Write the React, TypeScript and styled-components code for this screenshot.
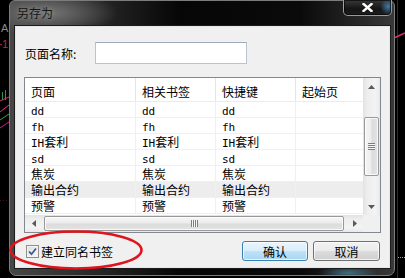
import React from "react";
import styled, { createGlobalStyle } from "styled-components";

const GlobalStyle = createGlobalStyle`
  html, body { margin: 0; padding: 0; background: #000; }
  body {
    overflow: hidden;
    font-family: "Noto Sans CJK SC", "Liberation Sans", sans-serif;
    font-size: 12px;
    color: #000;
  }
  * { box-sizing: border-box; }
`;

const Stage = styled.div`
  position: relative;
  width: 405px;
  height: 278px;
  overflow: hidden;
  background: #000;
  padding-left: 9px;
`;

const Backdrop = styled.svg`
  position: absolute;
  left: 0;
  top: 0;
`;

const Window = styled.div`
  position: relative;
  width: 386px;
  height: 276px;
  border: 1px solid #7c7c7c;
  border-radius: 6px 6px 7px 7px;
  background:
    radial-gradient(ellipse 70px 22px at 38px 12px, rgba(120, 120, 120, 0.95), rgba(120, 120, 120, 0) 100%),
    radial-gradient(ellipse 30px 8px at 338px 272px, rgba(90, 170, 200, 0.55), rgba(90, 170, 200, 0) 100%),
    linear-gradient(to right, #474747 0px, #262626 90px, #060606 170px, #0a0a0a 290px, #272727 350px, #3a3a3a 386px);
  padding: 0 4px 7px 5px;
  display: flex;
  flex-direction: column;
`;

const TitleBar = styled.div`
  height: 25px;
  flex: none;
  display: flex;
  justify-content: space-between;
  align-items: flex-start;
`;

const Title = styled.span`
  padding-left: 2px;
  line-height: 24px;
  font-size: 12px;
  color: #161616;
  text-shadow: 0 0 5px rgba(190, 190, 190, 0.55);
`;

const CloseButton = styled.div`
  width: 49px;
  height: 16px;
  margin-top: -1px;
  margin-right: -2px;
  border: 1px solid rgba(190, 190, 190, 0.75);
  border-top: none;
  border-radius: 0 0 5px 5px;
  background:
    radial-gradient(circle at 94% 45%, rgba(80, 150, 210, 0.75) 0, rgba(80, 150, 210, 0) 8px),
    linear-gradient(#383838, #141414 60%, #1e1e1e);
  box-shadow: inset 0 0 0 1px rgba(0, 0, 0, 0.6);
  display: flex;
  align-items: center;
  justify-content: center;
`;

const Client = styled.div`
  height: 242px;
  flex: none;
  background: #f0f0f0;
  border: 1px solid #e6e6e6;
  box-shadow: 0 0 0 1px #1c1c1c;
  padding: 15px 8px 6px 8px;
  display: flex;
  flex-direction: column;
`;

const NameRow = styled.div`
  height: 22px;
  display: flex;
  align-items: center;
`;

const NameLabel = styled.span`
  width: 71px;
  padding-left: 1px;
  font-size: 12px;
`;

const NameInput = styled.div`
  width: 152px;
  height: 22px;
  background: #fff;
  border: 1px solid #b7c3d0;
  border-top-color: #a0abba;
`;

const List = styled.div`
  margin-top: 13px;
  height: 156px;
  border: 1px solid #828790;
  background: #fff;
  display: grid;
  grid-template-columns: 1fr 17px;
  grid-template-rows: 1fr 17px;
`;

const ListView = styled.div`
  overflow: hidden;
  display: flex;
  flex-direction: column;
`;

const HeaderRow = styled.div`
  height: 24px;
  flex: none;
  display: flex;
  border-bottom: 1px solid #ececec;
`;

const HeaderCell = styled.div<{ $w: number }>`
  flex: 0 0 ${(p) => p.$w}px;
  border-right: 1px solid #e5e5e5;
  padding: 3px 0 0 6px;
  display: flex;
  align-items: center;
  font-size: 12px;
  white-space: nowrap;
`;

const Row = styled.div<{ $hl?: boolean }>`
  height: 16px;
  flex: none;
  display: flex;
  background: ${(p) => (p.$hl ? "#ededed" : "#fff")};
  border-bottom: 1px solid #f0f0f0;
`;

const Cell = styled.div<{ $w: number }>`
  flex: 0 0 ${(p) => p.$w}px;
  border-right: 1px solid #f0f0f0;
  padding-left: 6px;
  font-size: 12px;
  line-height: 15px;
  white-space: nowrap;
  overflow: hidden;
`;

const Latin = styled.span`
  font-family: "DejaVu Sans Mono", "Liberation Mono", monospace;
  font-size: 11px;
`;

const VScroll = styled.div`
  display: flex;
  flex-direction: column;
  background: linear-gradient(to right, #e2e2e2, #eeeeee 25%, #f3f3f3 75%, #e9e9e9);
`;

const HScroll = styled.div`
  display: flex;
  background: linear-gradient(to bottom, #e2e2e2, #eeeeee 25%, #f3f3f3 75%, #e9e9e9);
`;

const ArrowButton = styled.div`
  flex: 0 0 17px;
  width: 17px;
  height: 17px;
  display: flex;
  align-items: center;
  justify-content: center;
`;

const VTrack = styled.div`
  flex: 1;
  padding: 22px 1px 0 1px;
`;

const HTrack = styled.div`
  flex: 1;
  padding: 1px 2px 1px 2px;
`;

const VThumb = styled.div`
  height: 59px;
  border: 1px solid #999;
  border-radius: 2px;
  background: linear-gradient(to right, #f6f6f6, #ececec 45%, #dcdcdc 55%, #e3e3e3);
  box-shadow: inset 0 0 0 1px rgba(255, 255, 255, 0.8);
  display: flex;
  align-items: center;
  justify-content: center;
`;

const HThumb = styled.div`
  height: 100%;
  border: 1px solid #999;
  border-radius: 2px;
  background: linear-gradient(to bottom, #f6f6f6, #ececec 45%, #dcdcdc 55%, #e3e3e3);
  box-shadow: inset 0 0 0 1px rgba(255, 255, 255, 0.8);
  display: flex;
  align-items: center;
  justify-content: center;
`;

const VGrip = styled.span`
  width: 7px;
  height: 7px;
  background: repeating-linear-gradient(to bottom, #7e7e7e 0 1px, #f5f5f5 1px 2px);
`;

const HGrip = styled.span`
  width: 7px;
  height: 7px;
  background: repeating-linear-gradient(to right, #7e7e7e 0 1px, #f5f5f5 1px 2px);
`;

const Corner = styled.div`
  background: #f0f0f0;
`;

const BottomRow = styled.div`
  margin-top: 8px;
  height: 20px;
  display: flex;
  align-items: center;
  justify-content: space-between;
`;

const CheckLabel = styled.label`
  display: flex;
  align-items: center;
  padding-left: 2px;
  font-size: 12px;
`;

const CheckBox = styled.span`
  width: 13px;
  height: 13px;
  border: 1px solid #8e8f8f;
  background: linear-gradient(135deg, #dcdcdc, #fbfbfb);
  box-shadow: inset 0 0 0 1px #f4f4f4;
  display: flex;
  align-items: center;
  justify-content: center;
  margin-right: 2px;
`;

const Buttons = styled.div`
  display: flex;
  gap: 5px;
  margin-right: 1px;
`;

const Button = styled.div<{ $w: number; $default?: boolean }>`
  width: ${(p) => p.$w}px;
  height: 20px;
  border: 1px solid ${(p) => (p.$default ? "#3c7fb1" : "#707070")};
  border-radius: 3px;
  background: ${(p) =>
    p.$default
      ? "linear-gradient(#e9f5fc 0%, #d8eefb 50%, #bfe2f8 50%, #aad6f2 100%)"
      : "linear-gradient(#f2f2f2 0%, #ebebeb 50%, #dddddd 50%, #cfcfcf 100%)"};
  box-shadow: inset 0 0 0 1px rgba(255, 255, 255, 0.7);
  display: flex;
  align-items: center;
  justify-content: center;
  font-size: 12px;
`;

const Annotation = styled.svg`
  position: absolute;
  left: 0;
  top: 0;
  pointer-events: none;
`;

type Dir = "up" | "down" | "left" | "right";

const Arrow: React.FC<{ dir: Dir }> = ({ dir }) => {
  const vertical = dir === "up" || dir === "down";
  const w = vertical ? 7 : 4;
  const h = vertical ? 4 : 7;
  const pts = {
    up: "0,4 3.5,0 7,4",
    down: "0,0 7,0 3.5,4",
    left: "4,0 4,7 0,3.5",
    right: "0,0 4,3.5 0,7",
  }[dir];
  return (
    <svg width={w} height={h} viewBox={`0 0 ${w} ${h}`}>
      <polygon points={pts} fill="#5a5a5a" />
    </svg>
  );
};

const Mixed: React.FC<{ text: string }> = ({ text }) => {
  const parts = text.match(/[\x00-\x7f]+|[^\x00-\x7f]+/g) || [];
  return (
    <>
      {parts.map((p, i) =>
        /^[\x00-\x7f]/.test(p) ? <Latin key={i}>{p}</Latin> : <React.Fragment key={i}>{p}</React.Fragment>
      )}
    </>
  );
};

const columns = [
  { title: "页面", w: 111 },
  { title: "相关书签", w: 80 },
  { title: "快捷键", w: 80 },
  { title: "起始页", w: 80 },
];

const rows = ["dd", "fh", "IH套利", "sd", "焦炭", "输出合约", "预警"];

export default function App() {
  return (
    <>
      <GlobalStyle />
      <Stage>
        <Backdrop width="405" height="278" viewBox="0 0 405 278">
          <text x="1" y="32" fill="#8a8a8a" fontSize="11" fontFamily="Liberation Sans">A</text>
          <text x="2" y="48" fill="#d0203a" fontSize="11" fontFamily="Liberation Sans">1</text>
          <line x1="0" y1="44.5" x2="2" y2="44.5" stroke="#b01830" />
          <line x1="2.5" y1="92" x2="2.5" y2="100" stroke="#2e9a40" />
          <line x1="5.5" y1="90" x2="5.5" y2="100" stroke="#2e9a40" />
          <polyline points="0,101 9,97" stroke="#d0307a" fill="none" />
          <polyline points="0,112 9,105" stroke="#e0308a" fill="none" />
          <polyline points="0,120 9,114" stroke="#36a040" fill="none" />
          <polyline points="0,128 9,122" stroke="#d0208a" fill="none" />
          <line x1="0" y1="200.5" x2="9" y2="200.5" stroke="#501010" strokeDasharray="1 2" />
          <line x1="397.5" y1="0" x2="397.5" y2="278" stroke="#2e2e2e" />
          <polyline points="394,38 405,33" stroke="#e02a7a" strokeWidth="1.5" fill="none" />
          <line x1="398" y1="257.5" x2="405" y2="257.5" stroke="#b8b820" strokeDasharray="1 1" />
        </Backdrop>
        <Window>
          <TitleBar>
            <Title>另存为</Title>
            <CloseButton>
              <svg width="11" height="9" viewBox="0 0 11 9">
                <path d="M1.5 1 L9.5 8 M9.5 1 L1.5 8" stroke="#fff" strokeWidth="2.4" strokeLinecap="square" fill="none" />
              </svg>
            </CloseButton>
          </TitleBar>
          <Client>
            <NameRow>
              <NameLabel>页面名称:</NameLabel>
              <NameInput />
            </NameRow>
            <List>
              <ListView>
                <HeaderRow>
                  {columns.map((c) => (
                    <HeaderCell key={c.title} $w={c.w}>{c.title}</HeaderCell>
                  ))}
                </HeaderRow>
                {rows.map((r, i) => (
                  <Row key={i} $hl={i === 5}>
                    <Cell $w={111}><Mixed text={r} /></Cell>
                    <Cell $w={80}><Mixed text={r} /></Cell>
                    <Cell $w={80}><Mixed text={r} /></Cell>
                    <Cell $w={80} />
                  </Row>
                ))}
              </ListView>
              <VScroll>
                <ArrowButton><Arrow dir="up" /></ArrowButton>
                <VTrack>
                  <VThumb><VGrip /></VThumb>
                </VTrack>
                <ArrowButton><Arrow dir="down" /></ArrowButton>
              </VScroll>
              <HScroll>
                <ArrowButton><Arrow dir="left" /></ArrowButton>
                <HTrack>
                  <HThumb><HGrip /></HThumb>
                </HTrack>
                <ArrowButton><Arrow dir="right" /></ArrowButton>
              </HScroll>
              <Corner />
            </List>
            <BottomRow>
              <CheckLabel>
                <CheckBox>
                  <svg width="9" height="9" viewBox="0 0 9 9">
                    <path d="M1 4.5 L3.5 7.2 L8 1.5" stroke="#3d5a99" strokeWidth="1.8" fill="none" />
                  </svg>
                </CheckBox>
                建立同名书签
              </CheckLabel>
              <Buttons>
                <Button $w={66} $default>确认</Button>
                <Button $w={67}>取消</Button>
              </Buttons>
            </BottomRow>
          </Client>
        </Window>
        <Annotation width="405" height="278" viewBox="0 0 405 278">
          <ellipse cx="76" cy="250" rx="65.5" ry="18.5" stroke="#e0141c" strokeWidth="2.6" fill="none" />
        </Annotation>
      </Stage>
    </>
  );
}
